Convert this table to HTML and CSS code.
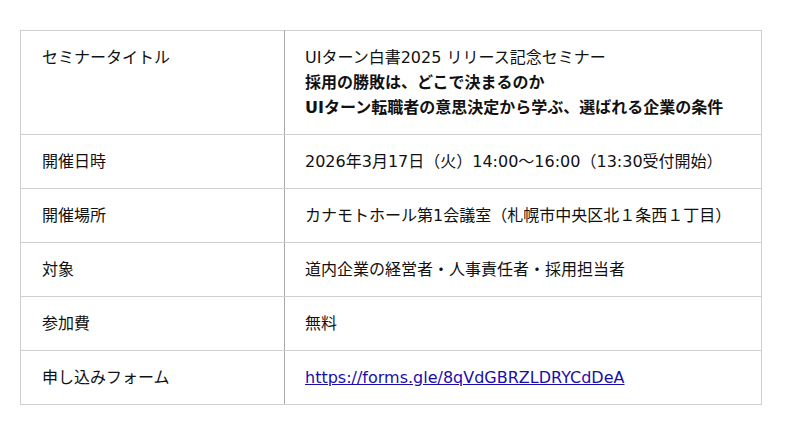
FILE: index.html
```html
<!DOCTYPE html>
<html lang="ja">
<head>
<meta charset="utf-8">
<link rel="stylesheet" href="styles.css">
</head>
<body>
<table class="info">
  <tr>
    <th>セミナータイトル</th>
    <td>UIターン白書2025 リリース記念セミナー<br><strong>採用の勝敗は、どこで決まるのか</strong><br><strong>UIターン転職者の意思決定から学ぶ、選ばれる企業の条件</strong></td>
  </tr>
  <tr>
    <th>開催日時</th>
    <td>2026年3月17日（火）14:00〜16:00（13:30受付開始）</td>
  </tr>
  <tr>
    <th>開催場所</th>
    <td>カナモトホール第1会議室（札幌市中央区北１条西１丁目）</td>
  </tr>
  <tr>
    <th>対象</th>
    <td>道内企業の経営者・人事責任者・採用担当者</td>
  </tr>
  <tr>
    <th>参加費</th>
    <td>無料</td>
  </tr>
  <tr>
    <th>申し込みフォーム</th>
    <td><a href="https://forms.gle/8qVdGBRZLDRYCdDeA">https://forms.gle/8qVdGBRZLDRYCdDeA</a></td>
  </tr>
</table>
</body>
</html>
```
FILE: styles.css
```css
html, body {
  margin: 0;
  background: #fff;
}
body {
  padding: 30px 38px 0 20px;
  font-family: "DejaVu Sans", "Noto Sans CJK JP", sans-serif;
  font-size: 16px;
  line-height: 25px;
  color: #111;
}
.info {
  width: 742px;
  border-collapse: collapse;
}
.info th, .info td {
  border: 1px solid #cfcfcf;
  padding: 14px 20px;
  text-align: left;
  vertical-align: top;
  font-weight: normal;
}
.info th {
  width: 222px;
  padding-left: 21px;
  border-right-color: #a8a8a8;
}
.info strong {
  font-weight: bold;
}
.info a {
  color: #1a0dab;
}
```
